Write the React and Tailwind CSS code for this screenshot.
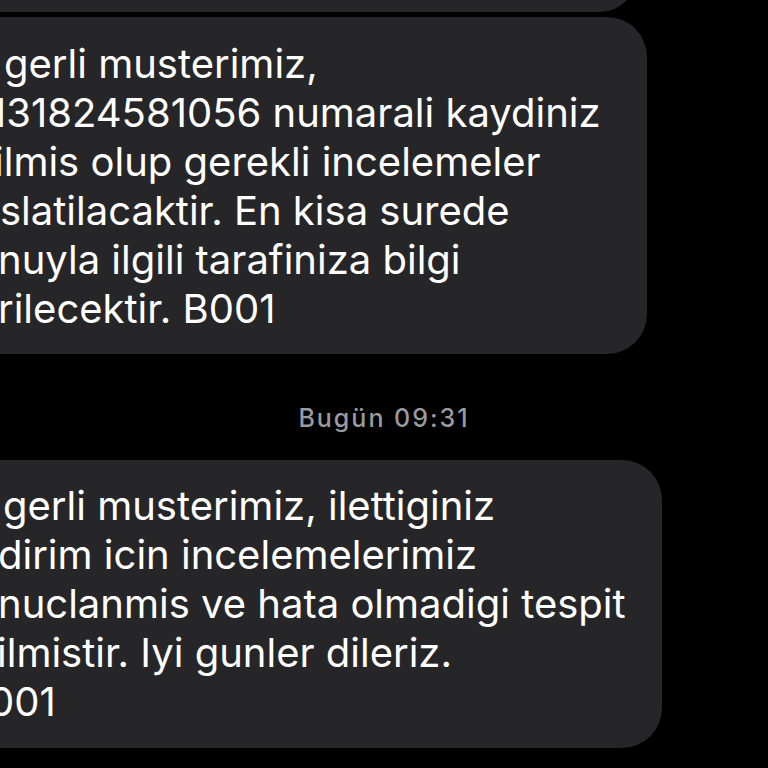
import React from 'react';

const FIRST = [
  { text: 'gerli musterimiz,', ml: 'ml-[4px]' },
  { text: '131824581056 numarali kaydiniz', ml: 'ml-[-10px]' },
  { text: 'ilmis olup gerekli incelemeler', ml: 'ml-[-6px]' },
  { text: 'slatilacaktir. En kisa surede', ml: 'ml-[0px]' },
  { text: 'nuyla ilgili tarafiniza bilgi', ml: 'ml-[-2px]' },
  { text: 'rilecektir. B001', ml: 'ml-[-2px]' },
];

const SECOND = [
  { text: 'gerli musterimiz, ilettiginiz', ml: 'ml-[3px]' },
  { text: 'dirim icin incelemelerimiz', ml: 'ml-[-2px]' },
  { text: 'nuclanmis ve hata olmadigi tespit', ml: 'ml-[-2px]' },
  { text: 'ilmistir. Iyi gunler dileriz.', ml: 'ml-[-3px]' },
  { text: '001', ml: 'ml-[-11px]' },
];

function Bubble({ lines, className }) {
  return (
    <div className={`bg-[#262629] rounded-r-[40px] overflow-hidden shrink-0 ${className}`}>
      {lines.map((l, i) => (
        <div key={i} className={`whitespace-nowrap text-[40px] leading-[49px] text-white ${l.ml}`}>
          {l.text}
        </div>
      ))}
    </div>
  );
}

export default function App() {
  return (
    <div className="w-[768px] h-[768px] bg-black overflow-hidden flex flex-col font-['Inter','Roboto',sans-serif]">
      {/* previous message, only its bottom shows */}
      <div className="h-[72px] mt-[-60px] w-[636px] bg-[#262629] rounded-r-[40px] shrink-0" />

      <Bubble lines={FIRST} className="mt-[5px] w-[647px] pt-[22px] pb-[21px]" />

      <div className="text-center text-[25px] tracking-[2px] font-medium text-[#9a9a9f] mt-[50px] leading-[28px]">
        Bugün 09:31
      </div>

      <Bubble lines={SECOND} className="mt-[28px] w-[662px] pt-[21px] pb-[22px]" />
    </div>
  );
}
